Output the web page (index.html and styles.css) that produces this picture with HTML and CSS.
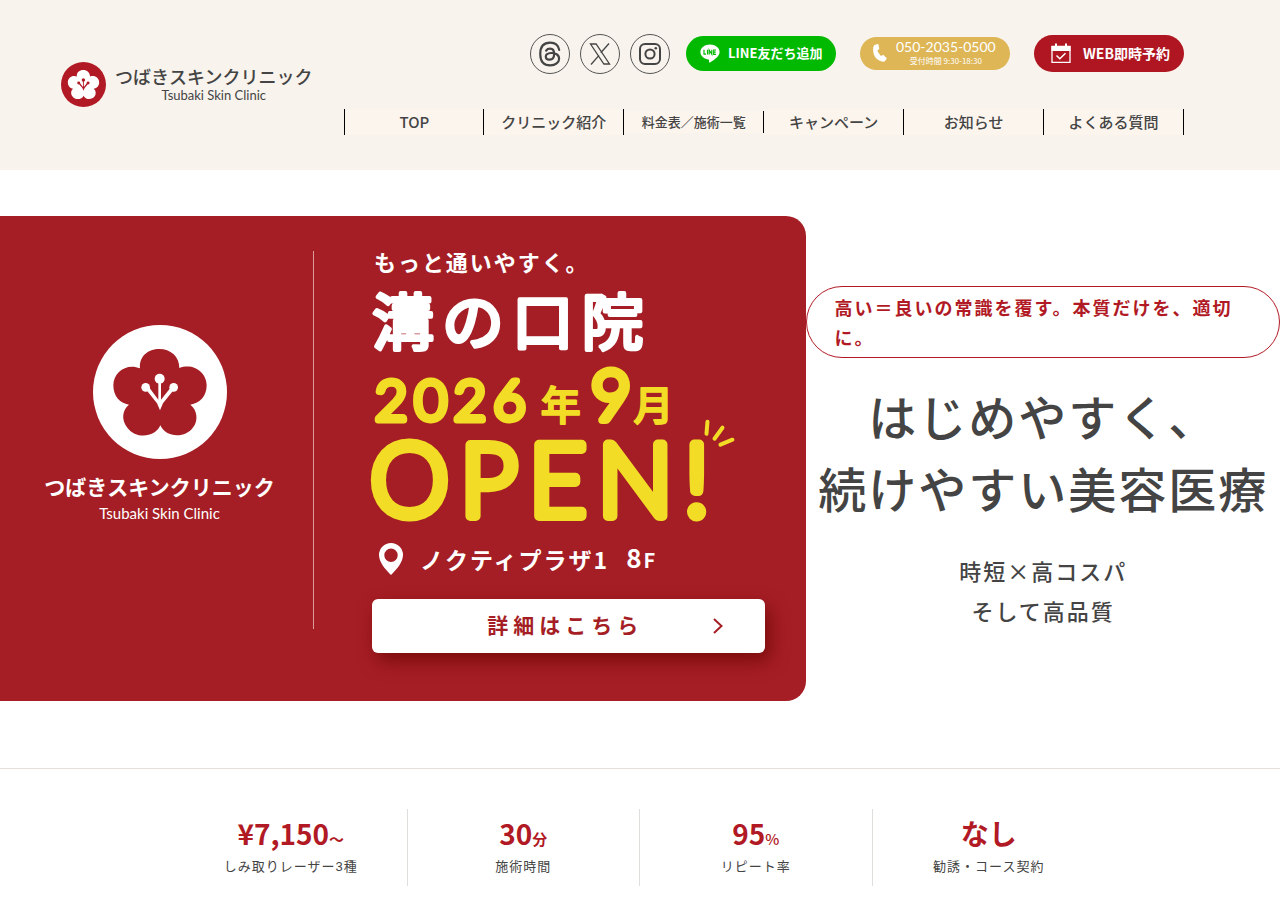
FILE: index.html
```html
<!DOCTYPE html>
<html lang="ja">
<head>
<meta charset="utf-8">
<meta name="viewport" content="width=device-width, initial-scale=1">
<title>つばきスキンクリニック</title>
<link rel="stylesheet" href="styles.css">
</head>
<body>
<svg class="defs" aria-hidden="true">
  <symbol id="flower" viewBox="0 0 402 402">
    <circle class="disc" cx="201" cy="201" r="201"/>
    <path class="petals" d="M141 130C138 93 166 72 199 72S259 94 259 129C300 113 341 141 341 181C341 213 321 235 292 239C313 255 316 286 301 306C278 341 218 339 202 301C185 339 128 342 103 308C83 282 89 254 108 239C80 235 61 213 61 181C61 141 102 113 141 130Z"/>
    <g class="disc">
      <circle cx="200" cy="161" r="15"/><circle cx="158" cy="187" r="13"/><circle cx="242" cy="187" r="13"/>
      <path d="M196 165h8v59l32-40 9 7-35 44-9 21-9-21-35-44 9-7 30 40z"/>
    </g>
  </symbol>
</svg>

<header class="header">
  <a class="logo" href="#">
    <svg class="logo-mark" aria-hidden="true"><use href="#flower"/></svg>
    <span class="logo-text"><span class="logo-ja">つばきスキンクリニック</span><span class="logo-en">Tsubaki Skin Clinic</span></span>
  </a>
  <div class="header-main">
    <div class="actions">
      <div class="social">
        <a class="round" href="#" aria-label="Threads">
          <svg viewBox="0 0 24 24" width="26" height="26"><path fill="none" stroke="currentColor" stroke-width="2" stroke-linecap="round" d="M20.5 8.2C19.6 3.9 16.700 1.500 12.300 1.500C6 1.500 3 5.600 3 12s3 10.500 9.300 10.500c4.800 0 8.100-2.800 8.100-6.100c0-3.900-3.700-5.400-7.500-5.300c-3.200.1-4.900 1.500-4.800 3.400c.1 1.700 1.600 2.800 3.600 2.700c2.600-.1 4.100-1.800 4.100-5.300c0-3.200-1.200-4.900-3.700-4.900c-1.700 0-2.900.6-3.700 1.800"/></svg>
        </a>
        <a class="round" href="#" aria-label="X">
          <svg viewBox="0 0 24 24" width="24" height="24" fill="none" stroke="currentColor" stroke-width="1.3"><path d="M2.500 2h5.600l13.400 20h-5.600zM21 1.500l-8.200 9.300M3 22.500l8-9.100"/></svg>
        </a>
        <a class="round" href="#" aria-label="Instagram">
          <svg viewBox="0 0 24 24" width="24" height="24" fill="none" stroke="currentColor" stroke-width="2"><rect x="2" y="2" width="20" height="20" rx="5"/><circle cx="12" cy="12" r="4.600"/><circle cx="17.800" cy="6.200" r="1.300" fill="currentColor" stroke="none"/></svg>
        </a>
      </div>
      <a class="pill pill-line" href="#">
        <svg viewBox="0 0 20 19" width="20" height="19" aria-hidden="true"><path fill="#fff" d="M10 .5C4.700.5.4 3.800.4 8c0 3.700 3.300 6.800 7.800 7.400 1.300.3.900 1.300.8 2.900 0 .4.400.4.700.2 2.400-1.300 9.900-5.600 9.900-10.500C19.600 3.800 15.300.5 10 .5z"/><path fill="none" stroke="#00b900" stroke-width="1.200" d="M4 5.800v4.300h2M7.500 5.700v4.900M9.200 10.600V6l2.600 4.200V5.700M16 6h-2.300v4.300H16M13.700 8.200h2"/></svg>
        <span class="pill-label">LINE友だち追加</span>
      </a>
      <a class="pill pill-tel" href="#">
        <svg viewBox="0 0 14 18" width="14" height="18" aria-hidden="true"><path fill="#fff" d="M2.200.7 4.700.1q.6 0 .8.500l.8 3.800q0 .5-.4.800L4.400 6.400q1 3.200 3.600 5.500l1.800-.8q.6-.2 1 .2l2.700 2.700q.5.500 0 1l-1.500 2q-.5.800-1.500.7C4 17 .2 12.500.1 5.300.1 2.900.7 1.200 2.200.7z"/></svg>
        <span class="tel-text"><span class="tel-num">050-2035-0500</span><span class="tel-hours">受付時間 9:30-18:30</span></span>
      </a>
      <a class="pill pill-web" href="#">
        <svg viewBox="0 0 20 20" width="20" height="20" aria-hidden="true"><path fill="none" stroke="#fff" stroke-width="1.300" d="M1 3.500h18v15.800H1z"/><path fill="#fff" d="M.5 3h19v5H.5z"/><path stroke="#fff" stroke-width="2" d="M5 .5v4M15 .5v4"/><path fill="none" stroke="#fff" stroke-width="1.500" d="m5.500 12.500 3.300 3.300 5.700-5.500"/></svg>
        <span class="pill-label">WEB即時予約</span>
      </a>
    </div>
    <nav class="nav">
      <a href="#">TOP</a>
      <a href="#">クリニック紹介</a>
      <a class="nav-small" href="#">料金表／施術一覧</a>
      <a href="#">キャンペーン</a>
      <a href="#">お知らせ</a>
      <a href="#">よくある質問</a>
    </nav>
  </div>
</header>

<main>
  <section class="hero">
    <div class="banner">
      <div class="banner-brand">
        <svg class="banner-mark" aria-hidden="true"><use href="#flower"/></svg>
        <span class="brand-ja">つばきスキンクリニック</span>
        <span class="brand-en">Tsubaki Skin Clinic</span>
      </div>
      <div class="banner-copy">
        <svg class="banner-title" viewBox="0 0 394 280">
          <g class="white">
            <text class="t-lead" x="2" y="20">もっと通いやすく。</text>
            <text class="t-place" x="0" y="94">溝の口院</text>
          </g>
          <g class="yellow">
            <text class="t-year" x="3" y="169">2026</text>
            <text class="t-unit" x="169" y="169">年</text>
            <text class="t-month" x="219" y="169">9</text>
            <text class="t-unit" x="262" y="169">月</text>
            <text class="t-open" x="-2" y="265">OPEN!</text>
            <path class="spark" d="M336 171l-1 12M351 177l-8 11M361 189l-12 5"/>
          </g>
        </svg>
        <div class="place">
          <svg viewBox="0 0 24 32" width="24" height="32" aria-hidden="true"><path fill="#fff" fill-rule="evenodd" d="M12 0a12 12 0 0 1 12 12c0 7-6 14-12 20C6 26 0 19 0 12A12 12 0 0 1 12 0zm0 5.500a6.700 6.700 0 1 0 0 13.400 6.700 6.700 0 0 0 0-13.400z"/></svg>
          <span class="place-name">ノクティプラザ1</span><span class="place-name floor">8<small>F</small></span>
        </div>
        <a class="detail" href="#">
          <span>詳細はこちら</span>
          <svg viewBox="0 0 10 16" width="10" height="16" aria-hidden="true"><path fill="none" stroke="currentColor" stroke-width="2" d="m1 1 7.500 7L1 15"/></svg>
        </a>
      </div>
    </div>
    <div class="hero-text">
      <p class="badge">高い＝良いの常識を覆す。本質だけを、適切に。</p>
      <h1>はじめやすく、<br>続けやすい美容医療</h1>
      <p class="sub">時短×高コスパ<br>そして高品質</p>
    </div>
  </section>

  <section class="stats">
    <dl class="stat-list">
      <div class="stat"><dt>しみ取りレーザー3種</dt><dd>¥7,150<small>〜</small></dd></div>
      <div class="stat"><dt>施術時間</dt><dd>30<small>分</small></dd></div>
      <div class="stat"><dt>リピート率</dt><dd>95<small class="light">%</small></dd></div>
      <div class="stat"><dt>勧誘・コース契約</dt><dd>なし</dd></div>
    </dl>
  </section>
</main>
</body>
</html>
```
FILE: styles.css
```css
* { box-sizing: border-box; }
body {
  margin: 0;
  background: #fff;
  color: #444;
  font-family: "Noto Sans CJK JP", sans-serif;
  overflow-x: hidden;
}
a { color: inherit; text-decoration: none; }
h1, p, dl, dd, dt { margin: 0; }
.defs { display: block; width: 0; height: 0; }

.header {
  display: flex;
  align-items: center;
  justify-content: space-between;
  gap: 32px;
  padding: 34px 96px 35px 61px;
  background: #f8f3ec;
}
.logo { display: flex; align-items: center; gap: 9px; white-space: nowrap; }
.logo-mark { --disc: #b11a25; --petal: #fff; width: 45px; height: 45px; }
.disc { fill: var(--disc); }
.petals { fill: var(--petal); }
.logo-text { display: flex; flex-direction: column; align-items: center; }
.logo-ja { font-size: 18px; line-height: 20px; font-weight: 500; }
.logo-en { font: 13px/18px Lato, sans-serif; }

.header-main { width: 840px; }
.actions { display: flex; align-items: center; justify-content: flex-end; gap: 24px; }
.social { display: flex; gap: 10px; margin-right: -8px; }
.round {
  display: grid;
  place-items: center;
  width: 40px;
  height: 40px;
  border: 1px solid #555;
  border-radius: 50%;
}
.pill {
  display: flex;
  align-items: center;
  width: 150px;
  margin-bottom: 2px;
  border-radius: 20px;
  color: #fff;
  font-weight: 700;
  font-size: 13px;
  white-space: nowrap;
}
.pill-label { line-height: 20px; padding-bottom: 1px; }
.pill-line { height: 35px; gap: 8px; padding-left: 14px; background: #00b900; }
.pill-tel { height: 33px; gap: 9px; padding-left: 13px; background: #deb656; }
.pill-web { height: 37px; gap: 12px; padding-left: 17px; background: #b01621; font-size: 14px; }
.tel-text { display: flex; flex-direction: column; align-items: center; font-weight: 400; }
.tel-num { font: 14px/16px Lato, sans-serif; }
.tel-hours { font-size: 8px; line-height: 12px; }

.nav { display: grid; grid-template-columns: repeat(6, 1fr); align-items: center; margin-top: 35px; }
.nav a {
  height: 26px;
  border-right: 1px solid #000;
  background: #fcf5ee;
  font-size: 15px;
  line-height: 26px;
  font-weight: 500;
  text-align: center;
  white-space: nowrap;
}
.nav a:first-child { border-left: 1px solid #000; }
.nav .nav-small { height: 22px; font-size: 13px; line-height: 22px; }

.hero { display: grid; grid-template-columns: 63% 37%; align-items: center; padding: 46px 0 67px; }
.banner {
  display: grid;
  grid-template-columns: 314px 1fr;
  padding: 35px 41px 48px 0;
  border-radius: 0 20px 20px 0;
  background: #a51e25;
  color: #fff;
}
.banner-brand {
  display: flex;
  flex-direction: column;
  align-items: center;
  height: 378px;
  padding: 74px 0 0 6px;
  border-right: 1px solid #dc9a9d;
  white-space: nowrap;
}
.banner-mark { --disc: #fff; --petal: #a51e25; width: 134px; height: 134px; }
.brand-ja { margin-top: 11px; font-size: 21px; line-height: 32px; font-weight: 700; }
.brand-en { font: 15px/22px Lato, sans-serif; }
.banner-copy { min-width: 0; padding-left: 58px; }
.banner-title {
  display: block;
  width: 100%;
  overflow: visible;
  font-family: "Liberation Sans", "Noto Sans CJK JP", sans-serif;
  stroke-linejoin: round;
  stroke-linecap: round;
}
.white { fill: #fff; stroke: #fff; }
.yellow { fill: #f3dc25; stroke: #f3dc25; }
.t-lead { font-size: 22px; font-weight: 700; letter-spacing: 2px; stroke-width: 0; }
.t-place { font-size: 62px; font-weight: 400; letter-spacing: 8px; stroke-width: 4px; }
.t-year { font-family: Lato, sans-serif; font-size: 56px; font-weight: 300; letter-spacing: 7px; stroke-width: 7px; }
.t-month { font-family: Lato, sans-serif; font-size: 70px; font-weight: 300; stroke-width: 8px; }
.t-unit { font-family: "Noto Sans CJK JP", sans-serif; font-size: 40px; font-weight: 500; stroke-width: 2px; }
.t-open { font-family: Lato, sans-serif; font-size: 100px; font-weight: 300; letter-spacing: 11px; stroke-width: 10px; }
.spark { fill: none; stroke-width: 4px; }
.place { display: flex; align-items: center; height: 32px; margin: 12px 0 24px; padding-left: 7px; gap: 17px; }
.place-name { font-size: 23px; line-height: 32px; font-weight: 700; letter-spacing: 2px; white-space: nowrap; }
.floor { font-size: 26px; }
.place-name small { font-size: 20px; }
.detail {
  display: grid;
  grid-template-columns: 1fr auto 1fr;
  align-items: center;
  height: 54px;
  padding: 0 42px 0 35px;
  border-radius: 6px;
  background: #fff;
  box-shadow: 5px 8px 18px #7a0c0c;
  color: #a51e25;
  font-size: 21px;
  font-weight: 700;
  letter-spacing: 5px;
}
.detail span { grid-column: 2; padding-bottom: 4px; white-space: nowrap; }
.detail svg { justify-self: end; }

.hero-text { display: flex; flex-direction: column; align-items: center; gap: 24px; min-width: 0; }
.badge {
  width: 100%;
  padding: 5px 27px;
  border: 1px solid #b11a25;
  border-radius: 36px;
  color: #b11a25;
  font-size: 18px;
  line-height: 30px;
  font-weight: 700;
  letter-spacing: 2px;
}
.hero h1 {
  margin: -3px 0 3px;
  font-size: 48px;
  line-height: 72px;
  font-weight: 500;
  letter-spacing: 2px;
  text-align: center;
  white-space: nowrap;
}
.sub { font-size: 22px; line-height: 40px; font-weight: 500; letter-spacing: 2px; text-align: center; }

.stats { padding: 40px 24px; border-top: 1px solid #e5dfda; }
.stat-list { display: grid; grid-template-columns: repeat(4, 1fr); max-width: 930px; margin: 0 auto; }
.stat {
  display: flex;
  flex-direction: column-reverse;
  justify-content: flex-end;
  align-items: center;
  height: 77px;
  padding-top: 6px;
  border-right: 1px solid #e0dedb;
}
.stat:last-child { border-right: 0; }
.stat dd { height: 36px; color: #b11a25; font-size: 28px; line-height: 36px; font-weight: 700; }
.stat dd small { font-size: 15px; line-height: 15px; }
.stat .light { font-weight: 500; }
.stat dt { margin-top: 6px; font-family: "Liberation Sans", "Noto Sans CJK JP", sans-serif; font-size: 13px; line-height: 20px; letter-spacing: 1px; }
```
